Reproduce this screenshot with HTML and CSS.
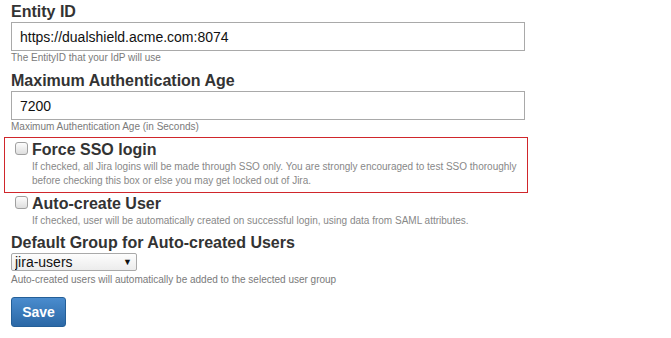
FILE: index.html
```html
<!DOCTYPE html>
<html lang="en">
<head>
<meta charset="UTF-8" />
<meta name="viewport" content="width=device-width, initial-scale=1.0" />
<title>SAML Single Sign On – Configuration</title>
<link rel="stylesheet" href="styles.css">
</head>
<body>
<form class="sso-form" onsubmit="return false">

  <!-- Entity ID ------------------------------------------------------ -->
  <label class="field-label" for="entityId">Entity ID</label>
  <input id="entityId" class="text-input" type="text" value="https://dualshield.acme.com:8074" />
  <div class="help">The EntityID that your IdP will use</div>

  <!-- Max auth age --------------------------------------------------- -->
  <label class="field-label spaced" for="maxAge">Maximum Authentication Age</label>
  <input id="maxAge" class="text-input" type="text" value="7200" />
  <div class="help">Maximum Authentication Age (in Seconds)</div>

  <!-- Checkboxes ----------------------------------------------------- -->
  <div class="check-row highlight">
    <span class="checkbox"></span>
    <div class="check-body">
      <div class="check-title">Force SSO login</div>
      <div class="check-desc">If checked, all Jira logins will be made through SSO only. You are strongly encouraged to test SSO thoroughly before checking this box or else you may get locked out of Jira.</div>
    </div>
  </div>

  <div class="check-row">
    <span class="checkbox"></span>
    <div class="check-body">
      <div class="check-title">Auto-create User</div>
      <div class="check-desc">If checked, user will be automatically created on successful login, using data from SAML attributes.</div>
    </div>
  </div>

  <!-- Default group -------------------------------------------------- -->
  <label class="field-label group-label" for="group">Default Group for Auto-created Users</label>
  <span class="select-wrap">
    <select id="group" class="select">
      <option>jira-users</option>
      <option>jira-administrators</option>
    </select>
  </span>
  <div class="help tight">Auto-created users will automatically be added to the selected user group</div>

  <button class="save-btn" type="submit">Save</button>
</form>
</body>
</html>
```

FILE: styles.css
```css
:root {
  --text: #333;
  --sub: #7a7a7a;
  --border: #a9a9a9;
  --alert: #d0262b;
}
* { box-sizing: border-box; margin: 0; }
html, body { background: #fff; font-family: "Liberation Sans", Arial, sans-serif; color: var(--text); }
body { padding: 2px 11px; }

.sso-form { width: 514px; display: flex; flex-direction: column; align-items: flex-start; }

/* --------------------  Labels & inputs  ----------- */
.field-label { display: block; font-size: 16px; font-weight: bold; line-height: 20px; color: var(--text); }
.field-label.spaced { margin-top: 6px; }
.field-label.group-label { margin-top: 5px; }

.text-input {
  width: 100%; height: 29px; padding: 0 8px; border: 1px solid var(--border); border-radius: 0;
  font: 14px "Liberation Sans", Arial, sans-serif; color: #111; background: #fff; outline: none;
}

.help { font-size: 10px; line-height: 14px; color: var(--sub); }
.help.tight { margin-top: 2px; }

/* --------------------  Checkbox rows  ------------- */
.check-row { display: flex; align-self: stretch; gap: 4px; padding-left: 4px; margin-top: 1px; }
.check-row.highlight { margin: 3px -3px 0 -7px; padding: 2px 0 4px 10px; border: 1px solid var(--alert); }

.checkbox {
  flex: none; width: 13px; height: 13px; margin-top: 2px; border: 1px solid #a0a0a0; border-radius: 3px;
  background: linear-gradient(#fdfdfd, #dedede);
}
.check-title { font-size: 16px; font-weight: bold; line-height: 20px; color: var(--text); }
.check-desc { font-size: 10px; line-height: 14px; color: #888; }

/* --------------------  Select  -------------------- */
.select-wrap { position: relative; display: inline-block; }
.select {
  appearance: none; -webkit-appearance: none; width: 126px; height: 18px; padding: 0 0 0 3px;
  border: 1px solid var(--border); border-radius: 2px; background: linear-gradient(#fdfdfd, #ececec);
  font: 14px/16px "Liberation Sans", Arial, sans-serif; color: #111;
}
.select-wrap::after {
  content: "▼"; position: absolute; right: 5px; top: 4px; font-size: 9px; line-height: 10px; color: #111; pointer-events: none;
}

/* --------------------  Button  -------------------- */
.save-btn {
  margin-top: 10px; width: 55px; height: 30px; border: 1px solid #245f98; border-radius: 3px;
  background: linear-gradient(#4a8cce, #2b68a6); color: #fff;
  font: bold 14px "Liberation Sans", Arial, sans-serif; cursor: pointer;
}
```
